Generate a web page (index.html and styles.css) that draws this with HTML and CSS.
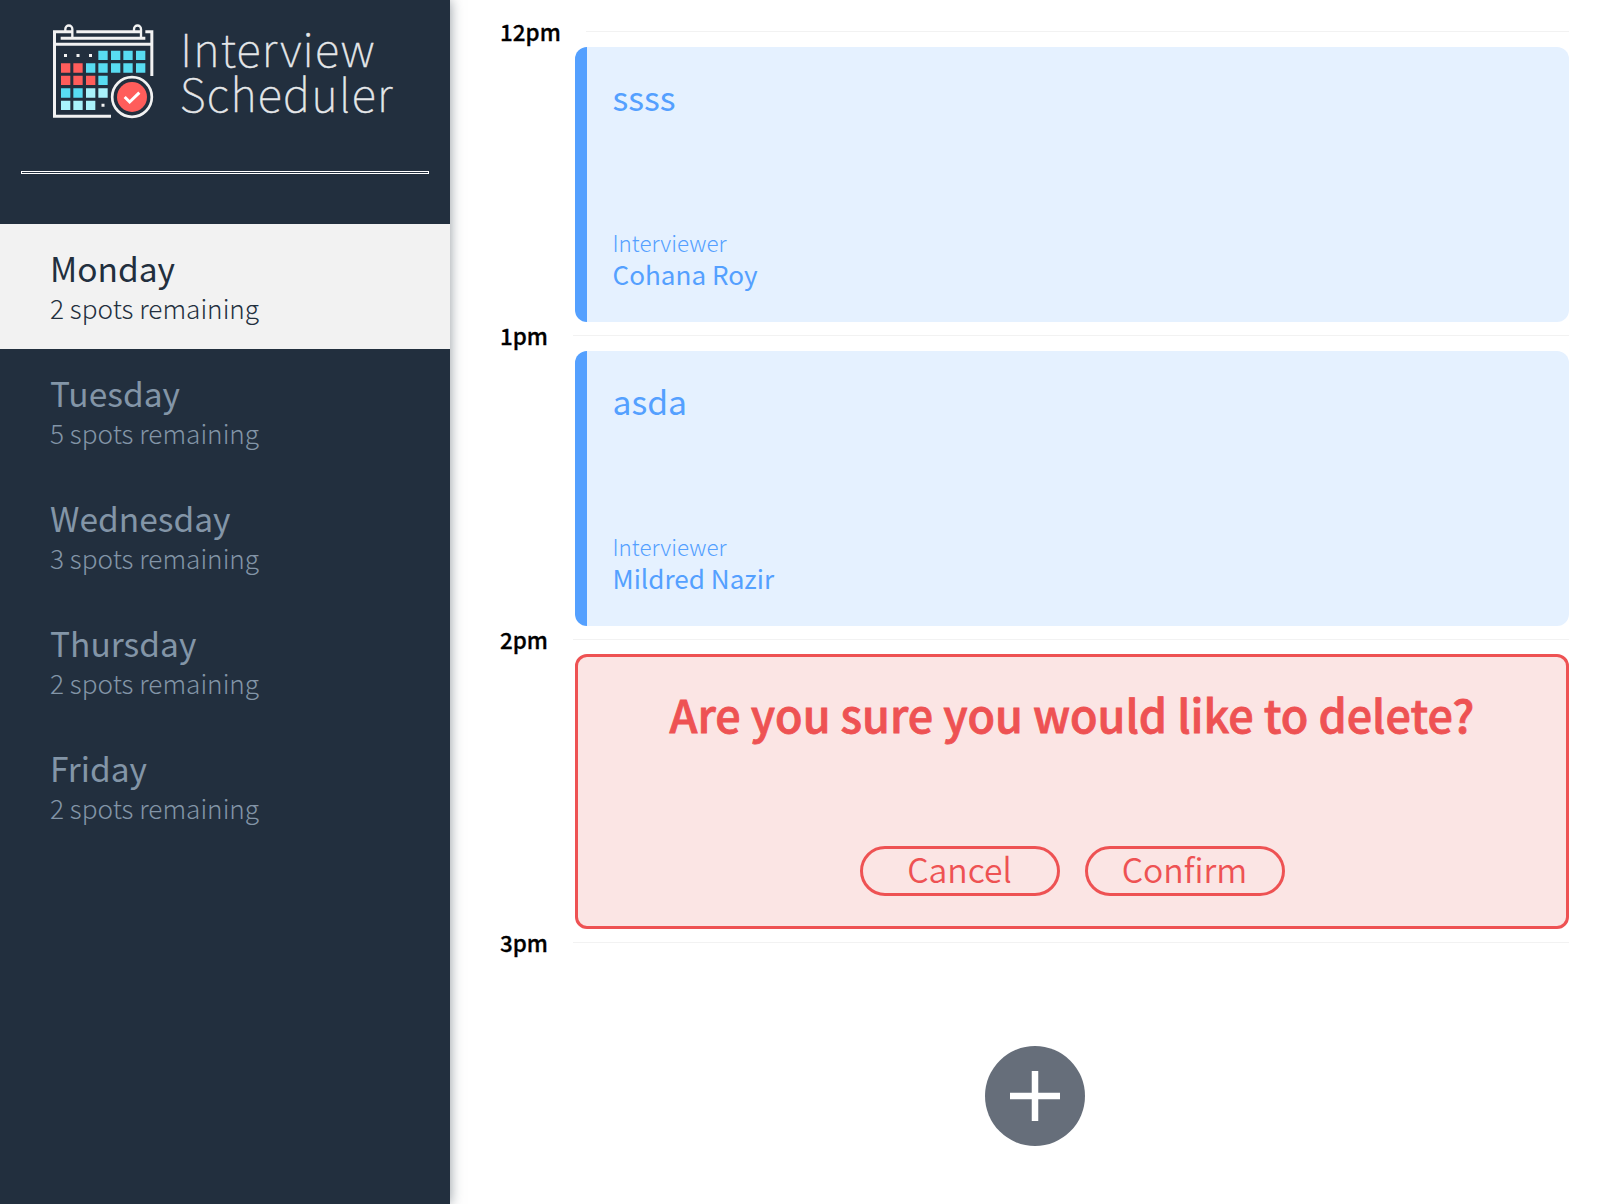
FILE: index.html
```html
<!DOCTYPE html>
<html lang="en">
<head>
<meta charset="utf-8">
<title>Interview Scheduler</title>
<link rel="stylesheet" href="styles.css">
</head>
<body>
<main class="layout">
  <section class="sidebar">
    <svg class="logo" viewBox="150 30 1050 345" role="img" aria-label="Interview Scheduler">
      <g fill="none" stroke="#f2f2f2" stroke-width="9">
        <path d="M333 349H163.500V95H218M229 95H424M436 95H455.500V228M159 133H460M182 114.500H436"/>
        <path d="M196 95V87a10.500 10.500 0 0 1 21 0V114M402 95V87a10.500 10.500 0 0 1 21 0V114" stroke-width="7"/>
        <circle cx="396" cy="291" r="59.500" stroke-width="8"/>
      </g>
      <path fill="#f2f2f2" d="M192 162h9v9h-9zM229.500 162h9v9h-9zM267 162h9v9h-9zM304.500 311h9v9h-9z"/>
      <path fill="#58dcf2" d="M295 152h28v28h-28zM333 152h28v28h-28zM370 152h28v28h-28zM408 152h28v28h-28zM258 190h28v28h-28zM295 190h28v28h-28zM333 190h28v28h-28zM370 190h28v28h-28zM408 190h28v28h-28zM295 227h28v28h-28zM183 265h28v28h-28zM220 265h28v28h-28z"/>
      <path fill="#ff5d5b" d="M183 190h28v28h-28zM220 190h28v28h-28zM183 227h28v28h-28zM220 227h28v28h-28zM258 227h28v28h-28z"/>
      <path fill="#a9f2fb" d="M258 265h28v28h-28zM295 265h28v28h-28zM183 302h28v28h-28zM220 302h28v28h-28zM258 302h28v28h-28z"/>
      <circle cx="396" cy="291" r="45" fill="#ff5d5b"/>
      <path d="M374 291L389 306L418 278" fill="none" stroke="#fff" stroke-width="9"/>
      <text class="logo-text" x="541" y="200" textLength="582">Interview</text>
      <text class="logo-text" x="539" y="336" textLength="638">Scheduler</text>
    </svg>
    <hr class="separator">
    <ul class="days">
      <li class="day day-selected"><h2 class="day-name">Monday</h2><h3 class="day-spots">2 spots remaining</h3></li>
      <li class="day"><h2 class="day-name">Tuesday</h2><h3 class="day-spots">5 spots remaining</h3></li>
      <li class="day"><h2 class="day-name">Wednesday</h2><h3 class="day-spots">3 spots remaining</h3></li>
      <li class="day"><h2 class="day-name">Thursday</h2><h3 class="day-spots">2 spots remaining</h3></li>
      <li class="day"><h2 class="day-name">Friday</h2><h3 class="day-spots">2 spots remaining</h3></li>
    </ul>
  </section>
  <section class="schedule">
    <article class="slot">
      <header class="slot-header slot-header-wide"><h4 class="time">12pm</h4><hr class="rule"></header>
      <div class="card">
        <h2 class="student">ssss</h2>
        <div><h4 class="label">Interviewer</h4><h3 class="interviewer">Cohana Roy</h3></div>
      </div>
    </article>
    <article class="slot">
      <header class="slot-header"><h4 class="time">1pm</h4><hr class="rule"></header>
      <div class="card">
        <h2 class="student">asda</h2>
        <div><h4 class="label">Interviewer</h4><h3 class="interviewer">Mildred Nazir</h3></div>
      </div>
    </article>
    <article class="slot slot-confirm">
      <header class="slot-header"><h4 class="time">2pm</h4><hr class="rule"></header>
      <div class="confirm">
        <h1 class="question">Are you sure you would like to delete?</h1>
        <div class="actions"><button class="button">Cancel</button><button class="button">Confirm</button></div>
      </div>
    </article>
    <article class="slot">
      <header class="slot-header"><h4 class="time">3pm</h4><hr class="rule"></header>
      <div class="empty">
        <svg class="add" viewBox="0 0 100 100" role="img" aria-label="Add">
          <circle cx="50" cy="50" r="50" fill="#666e7a"/>
          <path d="M25 50H75M50 25V75" stroke="#fff" stroke-width="6.500"/>
        </svg>
      </div>
    </article>
  </section>
</main>
</body>
</html>
```
FILE: styles.css
```css
* { box-sizing: border-box; margin: 0; padding: 0; }
body {
  font-family: "Noto Sans CJK SC", "Noto Sans", sans-serif;
  font-weight: 400;
  background: #fff;
  color: #000;
  overflow: hidden;
}
h1, h2, h3, h4 { font-weight: 400; white-space: nowrap; }
.layout { display: flex; height: 1204px; }
.sidebar {
  width: 450px;
  flex: none;
  background: #222f3e;
  box-shadow: 0 0 12px rgba(34, 47, 62, .5);
  padding-top: 10px;
}
.logo { display: block; width: 350px; height: 115px; margin-left: 50px; }
.logo-text { font-size: 136px; font-weight: 100; fill: #e6e8ea; stroke: #e6e8ea; stroke-width: 1.5px; }
.separator { margin: 46px 21px 50px; height: 3px; border: 1px solid #fff; }
.days { list-style: none; }
.day { height: 125px; padding: 24px 50px 0; color: #8395a7; }
.day-selected { background: #f2f2f2; color: #222f3e; }
.day-name { font-size: 33.5px; line-height: 40px; }
.day-spots { font-size: 26.2px; line-height: 40px; font-weight: 300; }
.schedule { flex: 1; padding: 16px 38px 0 50px; }
.slot { height: 304px; }
.slot-confirm { height: 303px; }
.slot-header { height: 31px; display: flex; }
.slot-confirm .slot-header { height: 30px; }
.time { width: 73px; flex: none; font-size: 22.4px; line-height: 31px; font-weight: 500; -webkit-text-stroke: .3px; }
.slot-header-wide .time { width: 86px; }
.rule { flex: 1; height: 1px; border: 0; margin-top: 15px; background: #f2f2f2; }
.card {
  margin-left: 75px;
  height: 275px;
  border-radius: 12px;
  border-left: 12px solid #54a0ff;
  background: #e5f1ff;
  color: #54a0ff;
  padding: 30px 26px 31px 25.5px;
  display: flex;
  flex-direction: column;
  justify-content: space-between;
}
.student { font-size: 33.7px; line-height: 40px; }
.label { font-size: 22.4px; line-height: 30px; font-weight: 300; }
.interviewer { font-size: 26.1px; line-height: 34px; }
.confirm {
  margin-left: 75px;
  height: 275px;
  border-radius: 12px;
  border: 3px solid #ee5253;
  background: #fbe5e4;
  color: #ee5253;
  padding: 27px 0 30px;
  display: flex;
  flex-direction: column;
  align-items: center;
  justify-content: space-between;
}
.question { font-size: 44.9px; line-height: 60px; font-weight: 500; -webkit-text-stroke: .8px; }
.actions { display: flex; gap: 25px; }
.button {
  width: 200px;
  height: 50px;
  border: 3px solid #ee5253;
  border-radius: 25px;
  background: transparent;
  color: #ee5253;
  font-family: inherit;
  font-size: 33.7px;
  line-height: 40px;
  padding-bottom: 4px;
  font-weight: 350;
}
.empty { display: flex; justify-content: center; padding-top: 88px; }
.add { width: 100px; height: 100px; }
```
